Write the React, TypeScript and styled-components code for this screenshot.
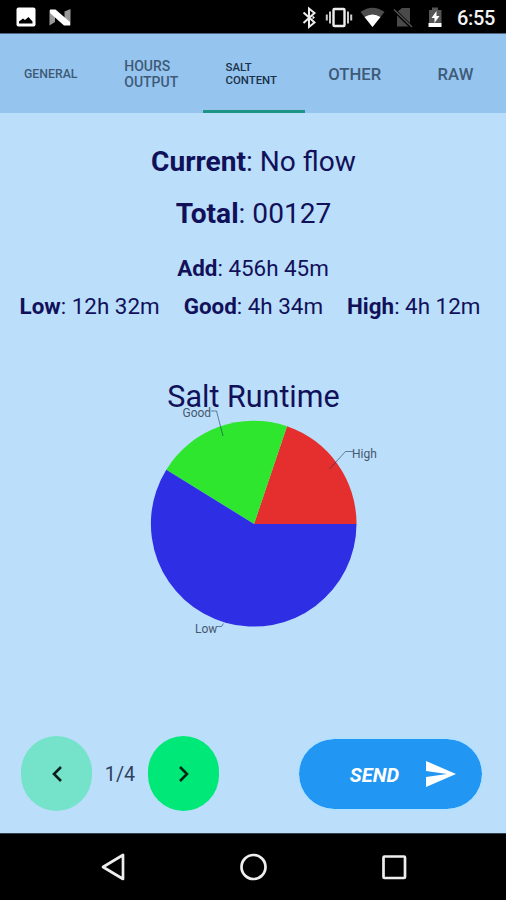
import React from 'react';
import styled, { createGlobalStyle } from 'styled-components';

const Global = createGlobalStyle`
  * { box-sizing: border-box; }
  body { margin: 0; background: #bbdefb; font-family: Roboto, "Liberation Sans", sans-serif; }
  button { font-family: inherit; padding: 0; margin: 0; border: 0; background: none; }
`;

const Screen = styled.div`
  width: 506px;
  height: 900px;
  display: flex;
  flex-direction: column;
  overflow: hidden;
  background: #bbdefb;
`;

const StatusBar = styled.header`
  height: 34px;
  flex: none;
  display: flex;
  justify-content: space-between;
  background: #000;
  border-bottom: 1px solid #4f6582;
`;

const StatusIcons = styled.svg`
  display: block;
  height: 33px;
  flex: none;
`;

const StatusGroup = styled.div`
  display: flex;
  align-items: center;
`;

const Clock = styled.time`
  width: 49px;
  padding-top: 3px;
  color: #f2f2f2;
  font-size: 20px;
  font-weight: 500;
  letter-spacing: -0.3px;
  line-height: 30px;
`;

const Tabs = styled.nav`
  height: 79px;
  flex: none;
  display: grid;
  grid-template-columns: 101.5px 101.5px 101.5px 100.5px 101px;
  background: #95c5ef;
`;

const Tab = styled.button<{ $size: number; $line: number; $active?: boolean }>`
  display: flex;
  align-items: center;
  justify-content: center;
  padding-top: 4px;
  padding-right: ${p => (p.$active ? 5 : p.$line === 16 ? 2 : 0)}px;
  border-bottom: 3px solid ${p => (p.$active ? '#1d9486' : 'transparent')};
  color: ${p => (p.$active ? '#1b3149' : '#3e5a77')};
  font-size: ${p => p.$size}px;
  line-height: ${p => p.$line}px;
  font-weight: 500;
  text-align: left;
  white-space: pre-line;
`;

const Content = styled.main`
  flex: 1;
  display: flex;
  flex-direction: column;
  padding-top: 23px;
  color: #11115a;
`;

const Headline = styled.p`
  margin: 0;
  height: 52px;
  padding-left: 1px;
  font-size: 28.1px;
  line-height: 52px;
  text-align: center;
  white-space: nowrap;
`;

const Added = styled.p`
  margin: 9px 0 0;
  font-size: 22.4px;
  line-height: 38px;
  text-align: center;
`;

const Durations = styled.div`
  display: flex;
  justify-content: center;
  gap: 24px;
  font-size: 22.4px;
  line-height: 38px;
  white-space: nowrap;
  padding-right: 6px;
`;

const ChartTitle = styled.h2`
  margin: 51px 0 0;
  height: 40px;
  font-size: 30.5px;
  font-weight: 400;
  line-height: 41px;
  padding-left: 1px;
  text-align: center;
`;

const Chart = styled.svg`
  display: block;
  width: 506px;
  height: 240px;
  margin-top: -16px;
  flex: none;
  text { font: 12px Roboto, sans-serif; fill: #46586e; }
`;

const Actions = styled.footer`
  display: flex;
  align-items: center;
  margin-top: 96px;
  padding: 0 22px 0 21px;
  height: 75px;
`;

const PageButton = styled.button<{ $dim?: boolean }>`
  display: flex;
  align-items: center;
  justify-content: center;
  width: 71px;
  height: 75px;
  border-radius: 35.5px;
  background: ${p => (p.$dim ? '#75e3c9' : '#00e878')};
`;

const PageCount = styled.span`
  width: 56px;
  padding-top: 1px;
  font-size: 19.7px;
  color: #30415f;
  text-align: center;
`;

const SendButton = styled.button`
  display: flex;
  align-items: center;
  justify-content: flex-end;
  gap: 27px;
  width: 187px;
  height: 74px;
  margin-left: auto;
  padding-right: 26px;
  border: 2px solid #b2e0ff;
  border-radius: 37px;
  background: #2296f3;
  background-clip: padding-box;
  color: #fff;
  font-size: 20px;
  font-weight: 700;
  font-style: italic;
  line-height: 24px;
`;

const SendLabel = styled.span`
  padding-top: 2px;
`;

const NavBar = styled.nav`
  height: 67px;
  flex: none;
  display: flex;
  align-items: center;
  justify-content: space-between;
  padding: 0 97px 0 99px;
  background: #000;
  border-top: 1px solid #33404c;
`;

const Slices = [
  { color: '#e52e2e', d: 'M254 144L356.500 144A103 103 0 0 0 287 46.2Z' },
  { color: '#2ee62e', d: 'M254 144L287 46.2A103 103 0 0 0 166.3 89.7Z' },
  { color: '#2e2ee5', d: 'M254 144L166.3 89.7A102.800 102.800 0 1 0 356.500 144Z' },
];

export default function App() {
  return (
    <>
      <Global />
      <Screen>
        <StatusBar>
          <StatusIcons width="90" viewBox="0 0 90 33">
            <rect x="16.5" y="7.5" width="19" height="19" rx="2" fill="#fff" />
            <path d="M19 23.5v-2l4-3 2 1.5 3.5-3 4 4.5v2z" fill="#000" />
            <path d="M49.5 10v15.500L55 22V13zM70.500 9l-6 2.500v10l6 4z" fill="#999" />
            <path d="M50 9.500h5.500L70 22v3.500h-6L50 13z" fill="#fff" />
          </StatusIcons>
          <StatusGroup>
            <StatusIcons width="157" viewBox="300 0 157 33">
              <path d="M303.500 12.500l11 10-5.500 4.500V8.500l5.500 4.500-11 10" fill="none" stroke="#eee" strokeWidth="2" />
              <path d="M312.500 15.500l2.500 2-2.500 2z" fill="#eee" />
              <rect x="333.500" y="9" width="11" height="17" rx="1" fill="none" stroke="#eee" strokeWidth="2.400" />
              <path d="M330 11.500v12M348 11.500v12M326.800 14.500v6M351.200 14.500v6" stroke="#ccc" strokeWidth="2" />
              <path d="M360.500 12q12-8.500 24 0l-12 15z" fill="#4c4c4c" />
              <path d="M364.500 17q8-5 16 0l-8 10z" fill="#fff" />
              <path d="M397 12l5-4h8v18.500h-13z" fill="#4a4a4a" />
              <path d="M393.500 9.500l18 17.500" stroke="#000" strokeWidth="3.500" />
              <path d="M394 9.500l18 17.500" stroke="#555" strokeWidth="1.400" />
              <path d="M429 10h3V7.500h6V10h3.500v13H429z" fill="#555" />
              <path d="M428.500 23h13v4h-13z" fill="#fff" />
              <path d="M436.500 11l-5 7h3v5l5-7h-3z" fill="#fff" />
            </StatusIcons>
            <Clock>6:55</Clock>
          </StatusGroup>
        </StatusBar>
        <Tabs>
          <Tab $size={12.3} $line={15}>GENERAL</Tab>
          <Tab $size={14} $line={16}>{'HOURS\nOUTPUT'}</Tab>
          <Tab $size={11.4} $line={13} $active>{'SALT\nCONTENT'}</Tab>
          <Tab $size={16.7} $line={19}>OTHER</Tab>
          <Tab $size={16.7} $line={19}>RAW</Tab>
        </Tabs>
        <Content>
          <Headline><b>Current</b>: No flow</Headline>
          <Headline><b>Total</b>: 00127</Headline>
          <Added><b>Add</b>: 456h 45m</Added>
          <Durations>
            <span><b>Low</b>: 12h 32m</span>
            <span><b>Good</b>: 4h 34m</span>
            <span><b>High</b>: 4h 12m</span>
          </Durations>
          <ChartTitle>Salt Runtime</ChartTitle>
          <Chart viewBox="0 20 506 240">
            {Slices.map(s => <path key={s.color} d={s.d} fill={s.color} />)}
            <g fill="none" stroke="#14285a" strokeOpacity="0.55" strokeWidth="1">
              <path d="M211 31h5.500l6.500 25" />
              <path d="M353 71.500h-7.500L329.500 89" />
              <path d="M217 246.500h4.500l2-3" />
            </g>
            <text x="182.500" y="37">Good</text>
            <text x="352" y="78">High</text>
            <text x="195" y="253">Low</text>
          </Chart>
          <Actions>
            <PageButton $dim aria-label="Previous">
              <svg width="12" height="18" viewBox="0 0 12 18" fill="none" stroke="#0b201c" strokeWidth="2.600"><path d="M10 2L3 9l7 7" /></svg>
            </PageButton>
            <PageCount>1/4</PageCount>
            <PageButton aria-label="Next">
              <svg width="12" height="18" viewBox="0 0 12 18" fill="none" stroke="#042512" strokeWidth="2.600"><path d="M2 2l7 7-7 7" /></svg>
            </PageButton>
            <SendButton>
              <SendLabel>SEND</SendLabel>
              <svg width="30" height="26" viewBox="0 0 30 26" fill="#fff"><path d="M0 0l30 13L0 26V16l21-3L0 10z" /></svg>
            </SendButton>
          </Actions>
        </Content>
        <NavBar>
          <svg width="30" height="30" viewBox="0 0 30 30" fill="none" stroke="#eee" strokeWidth="2.700" strokeLinejoin="round"><path d="M24 3v24L4 15z" /></svg>
          <svg width="30" height="30" viewBox="0 0 30 30" fill="none" stroke="#eee" strokeWidth="2.700"><circle cx="14.500" cy="15" r="12" /></svg>
          <svg width="30" height="30" viewBox="0 0 30 30" fill="none" stroke="#eee" strokeWidth="2.700"><rect x="4.500" y="4.500" width="21.500" height="21.500" rx="1" /></svg>
        </NavBar>
      </Screen>
    </>
  );
}
